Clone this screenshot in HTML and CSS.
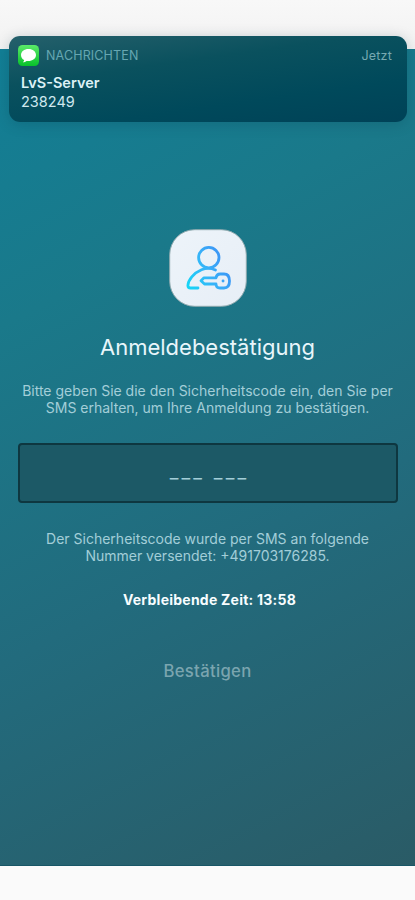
FILE: index.html
```html
<!DOCTYPE html>
<html lang="de">
<head>
<meta charset="utf-8">
<title>Anmeldebestätigung</title>
<link rel="stylesheet" href="styles.css">
</head>
<body>
<main class="screen">
  <svg class="app-icon" viewBox="0 0 78 78" aria-hidden="true">
    <defs>
      <linearGradient id="stroke" gradientUnits="userSpaceOnUse" x1="17" y1="54" x2="61" y2="32">
        <stop offset="0" stop-color="#16d5f6"/>
        <stop offset="0.5" stop-color="#38b3f8"/>
        <stop offset="1" stop-color="#3d8ef5"/>
      </linearGradient>
      <linearGradient id="tile" x1="0" y1="0" x2="1" y2="1">
        <stop offset="0" stop-color="#edf4fa"/>
        <stop offset="1" stop-color="#e7eef6"/>
      </linearGradient>
    </defs>
    <rect x="0.7" y="0.7" width="76.6" height="76.6" rx="25" fill="url(#tile)" stroke="#8fa9ae" stroke-width="1"/>
    <g fill="none" stroke="url(#stroke)" stroke-width="2.8" stroke-linecap="round" stroke-linejoin="round">
      <circle cx="39.800" cy="28.600" r="10.200"/>
      <path d="M46.500 41C42.500 39.200 37 39 32.500 40.700C24.500 44 19.100 51 18.900 56.500C18.900 58.300 19.900 59 21.500 59H29"/>
      <path d="M47 48.800H35L32 51.800L35.500 55H47M47 48.800C47.500 46 48.500 45 51 45H55C59 45 60.500 48 60.500 52C60.500 56.300 59 59 55 59H51C48 59 47 57.800 47 55"/>
      <path d="M54 52H54.100"/>
    </g>
  </svg>
  <h1 class="title">Anmeldebestätigung</h1>
  <p class="copy intro">Bitte geben Sie die den Sicherheitscode ein, den Sie per<br>SMS erhalten, um Ihre Anmeldung zu bestätigen.</p>
  <div class="code-field"><span class="code">___ ___</span></div>
  <p class="copy sent">Der Sicherheitscode wurde per SMS an folgende<br>Nummer versendet: +491703176285.</p>
  <p class="timer">Verbleibende Zeit: 13:58</p>
  <button class="confirm" type="button">Bestätigen</button>
</main>
<aside class="notification">
  <header class="note-head">
    <svg class="note-icon" viewBox="0 0 21 21" aria-hidden="true">
      <defs><linearGradient id="green" x1="0" y1="0" x2="0" y2="1"><stop offset="0" stop-color="#5bea69"/><stop offset="1" stop-color="#08c12b"/></linearGradient></defs>
      <rect width="21" height="21" rx="4.500" fill="url(#green)"/>
      <path fill="#fff" d="M10.500 4C6.200 4 3 6.600 3 10C3 12.200 4.200 14 6.100 15.100C6.100 16 5.500 16.700 4.900 17.200C6.400 17.200 7.600 16.700 8.500 15.900C13.700 16.600 18 14 18 10C18 6.600 14.800 4 10.500 4Z"/>
    </svg>
    <span class="note-app">NACHRICHTEN</span>
    <time class="note-time">Jetzt</time>
  </header>
  <div class="note-sender">LvS-Server</div>
  <div class="note-body">238249</div>
</aside>
</body>
</html>
```
FILE: styles.css
```css
* { box-sizing: border-box; }
body {
  margin: 0;
  height: 900px;
  padding-top: 49px;
  position: relative;
  overflow: hidden;
  background: linear-gradient(#f8f8f8 0, #f2f2f2 49px, #fafafa 50px);
  font-family: Inter, "Liberation Sans", sans-serif;
}
.screen {
  height: 817px;
  padding-top: 180px;
  display: flex;
  flex-direction: column;
  align-items: center;
  background: linear-gradient(153deg, #127f96 0%, #1a798a 27%, #226b7d 60%, #2a5b66 100%);
  border-bottom: 1px solid #185666;
  text-align: center;
  white-space: nowrap;
}
.app-icon { width: 78px; height: 78px; flex: none; }
.title {
  margin: 25px 0 0;
  font-size: 22px;
  line-height: 30px;
  font-weight: 400;
  color: #e8f6fb;
}
.copy {
  margin: 0;
  font-size: 14px;
  line-height: 17px;
  color: #a3ced8;
}
.intro { margin-top: 20px; }
.code-field {
  width: 380px;
  height: 60px;
  margin-top: 27px;
  display: flex;
  justify-content: center;
  align-items: center;
  background: #1c5966;
  border: 2px solid #0e3740;
  border-radius: 4px;
}
.code { margin: 0 0 4px 4px; font-size: 19px; letter-spacing: 3.2px; color: #a3ced8; }
.sent { margin-top: 27px; }
.timer {
  margin: 27px 0 0 4px;
  font-size: 14px;
  line-height: 17px;
  font-weight: 700;
  letter-spacing: 0.24px;
  color: #f7fdff;
}
.confirm {
  margin-top: 53px;
  padding: 0;
  border: 0;
  background: none;
  font: 500 16.7px/20px Inter, sans-serif;
  letter-spacing: 0.3px;
  color: #7ba5af;
}
.notification {
  position: absolute;
  left: 9px;
  top: 36px;
  width: 398px;
  height: 86px;
  padding: 9px 15px 0 9px;
  border-radius: 11px;
  background: linear-gradient(172deg, #25606b 0%, #0a515e 35%, #00495b 70%, #004257 100%);
  box-shadow: 0 2px 14px rgba(0, 50, 65, 0.22);
}
.note-head { display: flex; align-items: center; height: 21px; }
.note-icon { width: 21px; height: 21px; }
.note-app { margin-left: 7px; font-size: 12.5px; letter-spacing: 0.15px; color: #66a7b2; }
.note-time { margin-left: auto; font-size: 12.5px; letter-spacing: 0.2px; color: #76a9b1; }
.note-sender { margin: 7px 0 0 3px; font-size: 14.5px; line-height: 19px; font-weight: 600; color: #dcf1f6; }
.note-body { margin-left: 3px; font-size: 14.5px; line-height: 19px; color: #cfe8ef; }
```
